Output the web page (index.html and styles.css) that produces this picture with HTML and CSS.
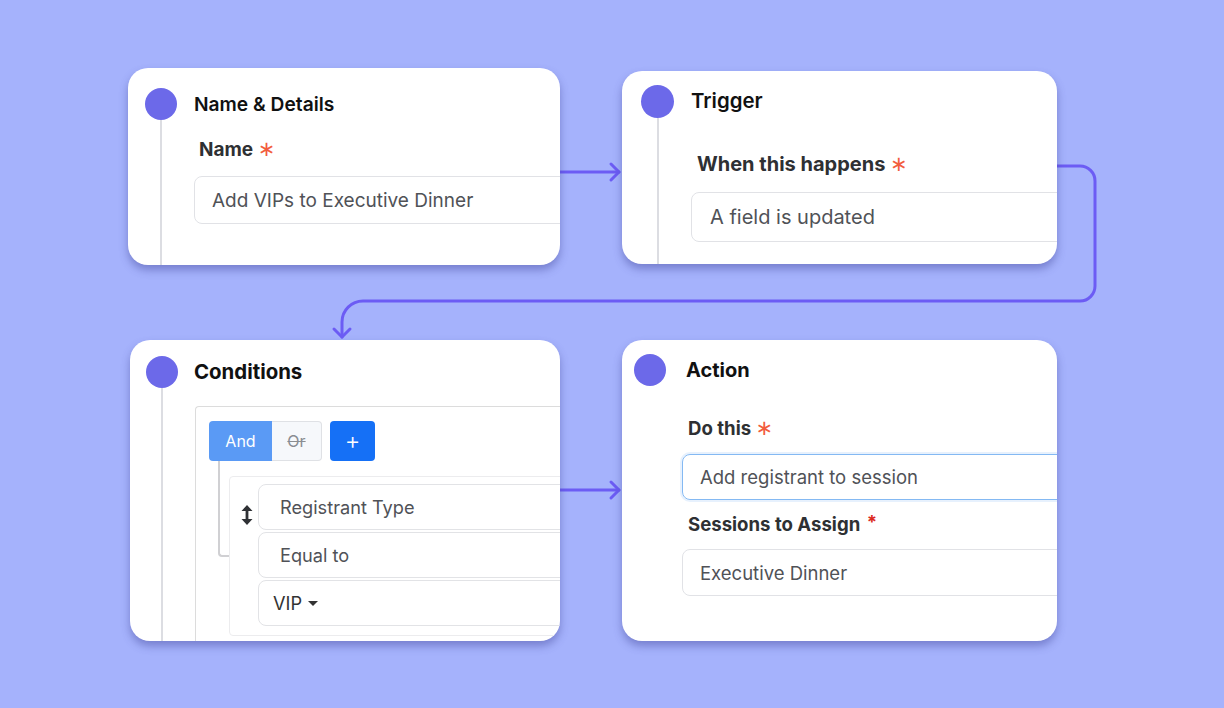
FILE: index.html
```html
<!DOCTYPE html>
<html lang="en">
<head>
<meta charset="utf-8">
<title>Workflow</title>
<link rel="stylesheet" href="styles.css">
</head>
<body>
<svg class="wires" width="1224" height="708" viewBox="0 0 1224 708" fill="none" stroke="#6c5cf4" stroke-width="3" stroke-linecap="round" stroke-linejoin="round">
  <path d="M560 172 H619"/>
  <path d="M611 164 L619 172 L611 180"/>
  <path d="M1057 166 H1080 A15 15 0 0 1 1095 181 V286 A15 15 0 0 1 1080 301 H363 A21 21 0 0 0 342 322 V337"/>
  <path d="M334 329 L342 337 L350 329"/>
  <path d="M560 490 H619"/>
  <path d="M611 482 L619 490 L611 498"/>
</svg>
<main class="board">
  <section class="card card-name">
    <div class="rail"><span class="dot"></span><span class="line"></span></div>
    <div class="body">
      <h2 class="title">Name &amp; Details</h2>
      <div class="label">Name <span class="req">∗</span></div>
      <div class="input">Add VIPs to Executive Dinner</div>
    </div>
  </section>

  <section class="card card-trigger">
    <div class="rail"><span class="dot"></span><span class="line"></span></div>
    <div class="body">
      <h2 class="title">Trigger</h2>
      <div class="label">When this happens <span class="req">∗</span></div>
      <div class="input">A field is updated</div>
    </div>
  </section>

  <section class="card card-cond">
    <div class="rail"><span class="dot"></span><span class="line"></span></div>
    <div class="body">
      <h2 class="title">Conditions</h2>
      <div class="group">
        <div class="btnrow">
          <span class="seg seg-and">And</span><span class="seg seg-or">Or</span>
          <span class="plus">+</span>
        </div>
        <div class="tree">
          <span class="branch"></span>
          <div class="rule">
            <svg class="drag" width="12" height="20" viewBox="0 0 12 20" fill="#2f3135">
              <path d="M6 0 L11.5 6 H7.4 V14 H11.5 L6 20 L0.5 14 H4.6 V6 H0.5 Z"/>
            </svg>
            <div class="fields">
              <div class="field">Registrant Type</div>
              <div class="field">Equal to</div>
              <div class="field field-select">VIP <span class="caret"></span></div>
            </div>
          </div>
        </div>
      </div>
    </div>
  </section>

  <section class="card card-action">
    <div class="rail"><span class="dot"></span></div>
    <div class="body">
      <h2 class="title">Action</h2>
      <div class="label">Do this <span class="req">∗</span></div>
      <div class="input input-focus">Add registrant to session</div>
      <div class="label label-2">Sessions to Assign <span class="req2">*</span></div>
      <div class="input input-2">Executive Dinner</div>
    </div>
  </section>
</main>
</body>
</html>
```

FILE: styles.css
```css
html, body {
  margin: 0;
  padding: 0;
}
body {
  width: 1224px;
  height: 708px;
  background: #a5b2fc;
  font-family: Inter, "Noto Sans", "Liberation Sans", sans-serif;
  position: relative;
  overflow: hidden;
}
.wires {
  position: absolute;
  left: 0;
  top: 0;
  z-index: 0;
}
.board {
  position: relative;
  z-index: 1;
  display: grid;
  grid-template-columns: 432px 435px;
  column-gap: 62px;
  row-gap: 75px;
  padding: 68px 0 0 128px;
  align-items: start;
}
.card {
  background: #fff;
  border-radius: 20px;
  overflow: hidden;
  display: flex;
  box-shadow: 0 5px 8px rgba(62, 66, 150, 0.45);
  box-sizing: border-box;
}
.rail {
  width: 32px;
  flex: none;
  display: flex;
  flex-direction: column;
  align-items: center;
}
.dot {
  width: 32px;
  height: 32px;
  border-radius: 50%;
  background: #6c69e9;
  flex: none;
}
.line {
  width: 2px;
  flex: 1;
  background: #dcdde2;
}
.body {
  flex: 1;
  min-width: 0;
  display: flex;
  flex-direction: column;
  align-items: flex-start;
}
.title {
  margin: 0;
  font-size: 19px;
  line-height: 32px;
  font-weight: 600;
  color: #111;
}
.label {
  font-size: 19px;
  line-height: 24px;
  font-weight: 700;
  color: #2e3033;
}
.req {
  color: #f25c3d;
  font-family: "DejaVu Sans", sans-serif;
  font-weight: 400;
  font-size: 21px;
}
.req2 {
  color: #dc2a1e;
  font-weight: 700;
  position: relative;
  top: -2px;
  margin-left: 2px;
}
.input {
  width: 460px;
  box-sizing: border-box;
  border: 1px solid #e1e2e6;
  border-radius: 8px;
  display: flex;
  align-items: center;
  font-size: 19px;
  color: #505257;
  flex: none;
}

/* card 1 */
.card-name {
  height: 197px;
  padding: 20px 0 0 17px;
}
.card-name .body { margin-left: 17px; }
.card-name .title { font-size: 19.2px; }
.card-name .label { margin-top: 17px; padding-left: 5px; }
.card-name .input { margin-top: 14px; height: 48px; padding-left: 17px; }

/* card 2 */
.card-trigger {
  height: 193px;
  margin-top: 3px;
  padding: 14px 0 0 19px;
}
.card-trigger .dot { width: 33px; height: 33px; }
.card-trigger .rail { width: 33px; }
.card-trigger .body { margin-left: 17px; }
.card-trigger .title { font-size: 20.4px; }
.card-trigger .label { margin-top: 35px; padding-left: 6px; font-size: 20px; }
.card-trigger .input { margin-top: 16px; height: 50px; padding-left: 18px; font-size: 20px; }

/* card 3 */
.card-cond {
  height: 301px;
  width: 430px;
  margin-left: 2px;
  padding: 16px 0 0 16px;
}
.card-cond .body { margin-left: 16px; }
.card-cond .title { font-size: 20.4px; font-weight: 700; }
.group {
  margin-top: 18px;
  margin-left: 1px;
  width: 480px;
  flex: 1;
  box-sizing: border-box;
  border-top: 1px solid #dcdcdc;
  border-left: 1px solid #dcdcdc;
  border-top-left-radius: 4px;
  padding: 14px 0 0 13px;
}
.btnrow {
  display: flex;
  height: 40px;
}
.seg {
  display: flex;
  align-items: center;
  justify-content: center;
  font-size: 16px;
  box-sizing: border-box;
}
.seg-and {
  width: 63px;
  background: #5a9af5;
  color: #fff;
  border-radius: 4px 0 0 4px;
}
.seg-or {
  width: 50px;
  background: #f6f8fb;
  color: #8a8d92;
  border: 1px solid #dfe1e5;
  border-left: none;
  border-radius: 0 4px 4px 0;
  text-decoration: line-through;
}
.plus {
  width: 45px;
  margin-left: 8px;
  background: #1570f6;
  color: #fff;
  border-radius: 4px;
  display: flex;
  align-items: center;
  justify-content: center;
  font-size: 24px;
  font-weight: 300;
  line-height: 1;
}
.tree {
  display: flex;
  align-items: flex-start;
  margin-left: 9px;
}
.branch {
  width: 9px;
  height: 94px;
  border-left: 2px solid #d0d0d3;
  border-bottom: 2px solid #d0d0d3;
  border-bottom-left-radius: 4px;
  flex: none;
}
.rule {
  margin-top: 15px;
  width: 400px;
  height: 160px;
  box-sizing: border-box;
  border: 1px solid #ececee;
  border-radius: 4px;
  padding: 7px 0 0 11px;
  display: flex;
  align-items: flex-start;
}
.drag {
  margin-top: 21px;
  flex: none;
}
.fields {
  margin-left: 5px;
  display: flex;
  flex-direction: column;
  gap: 2px;
}
.field {
  width: 340px;
  height: 46px;
  box-sizing: border-box;
  border: 1px solid #e2e3e6;
  border-radius: 8px;
  padding-left: 21px;
  display: flex;
  align-items: center;
  font-size: 18.2px;
  color: #505257;
}
.field-select {
  padding-left: 14px;
  color: #333;
}
.caret {
  width: 0;
  height: 0;
  margin-left: 6px;
  border-left: 5px solid transparent;
  border-right: 5px solid transparent;
  border-top: 5px solid #333;
}

/* card 4 */
.card-action {
  height: 301px;
  padding: 14px 0 0 12px;
}
.card-action .body { margin-left: 16px; }
.card-action .title { font-size: 20px; font-weight: 700; padding-left: 4px; }
.card-action .label { margin-top: 30px; padding-left: 6px; font-size: 18.6px; }
.card-action .input { font-size: 18.5px; }
.card-action .input-focus {
  margin-top: 14px;
  height: 46px;
  padding-left: 17px;
  border: 1.5px solid #84b9f3;
  box-shadow: 0 0 0 2px rgba(120, 175, 245, 0.18);
}
.card-action .label-2 { margin-top: 12px; }
.card-action .input-2 {
  margin-top: 13px;
  height: 47px;
  padding-left: 17px;
}
```
